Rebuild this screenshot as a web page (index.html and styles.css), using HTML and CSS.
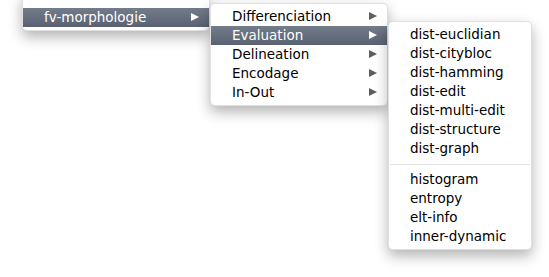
FILE: index.html
```html
<!DOCTYPE html>
<html lang="fr">
<head>
  <meta charset="UTF-8" />
  <title>Menus</title>
  <link rel="stylesheet" href="styles.css">
</head>
<body>
  <div class="menu menu-root">
    <div class="item active sub">fv-morphologie</div>
  </div>

  <div class="menu menu-second">
    <div class="item sub">Differenciation</div>
    <div class="item active sub">Evaluation</div>
    <div class="item sub">Delineation</div>
    <div class="item sub">Encodage</div>
    <div class="item sub">In-Out</div>
  </div>

  <div class="menu menu-third">
    <div class="item">dist-euclidian</div>
    <div class="item">dist-citybloc</div>
    <div class="item">dist-hamming</div>
    <div class="item">dist-edit</div>
    <div class="item">dist-multi-edit</div>
    <div class="item">dist-structure</div>
    <div class="item">dist-graph</div>
    <div class="sep"></div>
    <div class="item">histogram</div>
    <div class="item">entropy</div>
    <div class="item">elt-info</div>
    <div class="item">inner-dynamic</div>
  </div>
</body>
</html>
```

FILE: styles.css
```css
* {
  box-sizing: border-box;
}

body {
  margin: 0;
  background: #fff;
  font-family: 'DejaVu Sans', 'Liberation Sans', sans-serif;
  font-size: 13.5px;
  color: #000;
  width: 549px;
  height: 277px;
  overflow: hidden;
  position: relative;
}

/* menus flottants */
.menu {
  position: absolute;
  background: #fff;
  border: 1px solid rgba(0,0,0,0.12);
  border-radius: 5px;
  box-shadow: 0 6px 14px rgba(0,0,0,0.3);
  padding: 3px 0;
}

.menu-root {
  left: 22px;
  top: -6px;
  width: 188px;
  padding-top: 13px;
  border-radius: 0 0 5px 5px;
  z-index: 1;
}

.menu-second {
  left: 210px;
  top: 3px;
  width: 178px;
  z-index: 2;
}

.menu-third {
  left: 388px;
  top: 21px;
  width: 144px;
  z-index: 3;
}

.item {
  position: relative;
  height: 19px;
  line-height: 19px;
  padding-left: 21px;
  white-space: nowrap;
}

.item.active {
  color: #fff;
  background: linear-gradient(#737c8b, #5a6271);
}

.item.sub::after {
  content: "";
  position: absolute;
  right: 10px;
  top: 5px;
  border-left: 8px solid #5e5e5e;
  border-top: 4.5px solid transparent;
  border-bottom: 4.5px solid transparent;
}

.item.active.sub::after {
  border-left-color: #fff;
}

.sep {
  height: 1px;
  background: #e2e2e2;
  margin: 6px 1px 5px;
}
```
